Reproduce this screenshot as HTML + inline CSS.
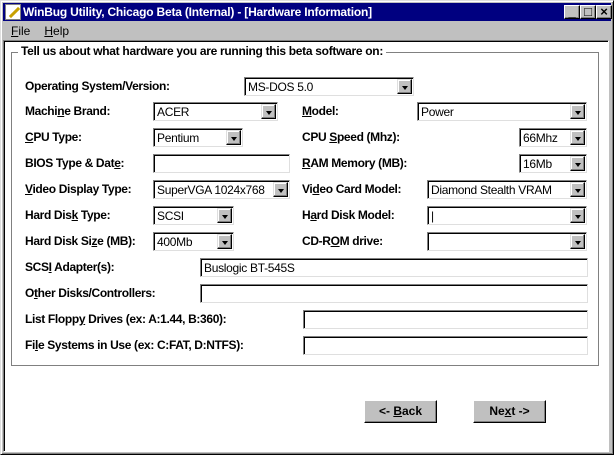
<!DOCTYPE html>
<html><head><meta charset="utf-8"><style>
*{box-sizing:border-box;margin:0;padding:0}
body{width:614px;height:455px;background:#c0c0c0;position:relative;overflow:hidden;font-family:"Liberation Sans",sans-serif;font-size:11px}
.frame{position:absolute;left:0;top:0;width:614px;height:455px;border:1px solid;border-color:#dfdfdf #000 #000 #dfdfdf;box-shadow:inset 1px 1px #fff,inset -1px -1px #808080}
.title{position:absolute;left:3px;top:3px;width:608px;height:18px;background:#000080;color:#fff;font-weight:bold;font-size:12px;line-height:18px;padding-left:20px;letter-spacing:-0.2px}
.ico{position:absolute;left:2px;top:1px;width:16px;height:16px;background:#fff;border:1px solid #808080}
.ico:after{content:"";position:absolute;left:2px;top:6px;width:13px;height:3px;background:#c8a000;transform:rotate(-45deg)}
.tb{position:absolute;top:2px;width:16px;height:14px;background:#c0c0c0;border:1px solid;border-color:#fff #000 #000 #fff;box-shadow:inset -1px -1px #808080;color:#000;font-size:13px;font-weight:bold;line-height:12px;text-align:center}
.menu{position:absolute;left:3px;top:22px;width:608px;height:18px;font-size:12px;line-height:18px}
.menu span{margin-left:8px;margin-right:6px}
.client{position:absolute;left:3px;top:40px;width:606px;height:412px;background:#fff;border:1px solid;border-color:#808080 #fff #fff #808080;box-shadow:inset 1px 1px #000}
.grp{position:absolute;left:11px;top:52px;width:588px;height:314px;border:1px solid #808080;box-shadow:1px 1px #fff,inset 1px 1px #fff}
.grp .lg{position:absolute;left:6px;top:-9px;background:#fff;padding:0 3px;font-weight:bold;font-size:12px;letter-spacing:-0.3px}
.l{position:absolute;font-weight:bold;font-size:12px;letter-spacing:-0.35px;white-space:nowrap}
.in{position:absolute;height:19px;background:#fff;border:1px solid;border-color:#808080 #dfdfdf #dfdfdf #808080;box-shadow:inset 1px 1px #000;font-size:12px;letter-spacing:-0.3px;line-height:17px;padding:1px 0 0 3px;white-space:nowrap;overflow:hidden}
.dd{position:absolute;right:1px;top:1px;width:15px;height:15px;background:#c0c0c0;border:1px solid;border-color:#dfdfdf #000 #000 #dfdfdf;box-shadow:inset -1px -1px #808080,inset 1px 1px #fff}
.dd:after{content:"";position:absolute;left:4px;top:6px;border:3px solid transparent;border-top:4px solid #000;border-bottom:0}
.btn{position:absolute;width:73px;height:23px;background:#c0c0c0;border:1px solid;border-color:#fff #000 #000 #fff;box-shadow:inset -1px -1px #808080;font-weight:bold;font-size:12px;text-align:center;line-height:21px}
u{text-decoration:underline}
</style></head><body>
<div class="frame"></div>
<div class="title"><div class="ico"></div>WinBug Utility, Chicago Beta (Internal) - [Hardware Information]
<div class="tb" style="left:561px">_</div><div class="tb" style="left:577px">□</div><div class="tb" style="left:593px">×</div></div>
<div class="menu"><span><u>F</u>ile</span><span><u>H</u>elp</span></div>
<div class="client"></div>
<div class="grp"><div class="lg">Tell us about what hardware you are running this beta software on:</div></div>

<div class="l" style="left:25px;top:79px">Operatin<u>g</u> System/Version:</div>
<div class="in" style="left:244px;top:77px;width:170px">MS-DOS 5.0<div class="dd"></div></div>

<div class="l" style="left:25px;top:104px">Machi<u>n</u>e Brand:</div>
<div class="in" style="left:153px;top:102px;width:125px">ACER<div class="dd"></div></div>
<div class="l" style="left:302px;top:104px"><u>M</u>odel:</div>
<div class="in" style="left:417px;top:102px;width:170px">Power<div class="dd"></div></div>

<div class="l" style="left:25px;top:130px"><u>C</u>PU Type:</div>
<div class="in" style="left:153px;top:128px;width:90px">Pentium<div class="dd"></div></div>
<div class="l" style="left:302px;top:130px">CPU <u>S</u>peed (Mhz):</div>
<div class="in" style="left:519px;top:128px;width:68px">66Mhz<div class="dd"></div></div>

<div class="l" style="left:25px;top:156px">BIOS Type &amp; Dat<u>e</u>:</div>
<div class="in" style="left:153px;top:154px;width:137px"></div>
<div class="l" style="left:302px;top:156px"><u>R</u>AM Memory (MB):</div>
<div class="in" style="left:519px;top:154px;width:68px">16Mb<div class="dd"></div></div>

<div class="l" style="left:25px;top:182px"><u>V</u>ideo Display Type:</div>
<div class="in" style="left:153px;top:180px;width:137px">SuperVGA 1024x768<div class="dd"></div></div>
<div class="l" style="left:302px;top:182px">Vi<u>d</u>eo Card Model:</div>
<div class="in" style="left:427px;top:180px;width:160px">Diamond Stealth VRAM<div class="dd"></div></div>

<div class="l" style="left:25px;top:208px">Hard Dis<u>k</u> Type:</div>
<div class="in" style="left:153px;top:206px;width:81px">SCSI<div class="dd"></div></div>
<div class="l" style="left:302px;top:208px">H<u>a</u>rd Disk Model:</div>
<div class="in" style="left:427px;top:206px;width:160px">|<div class="dd"></div></div>

<div class="l" style="left:25px;top:234px">Hard Disk Si<u>z</u>e (MB):</div>
<div class="in" style="left:153px;top:232px;width:81px">400Mb<div class="dd"></div></div>
<div class="l" style="left:302px;top:234px">CD-R<u>O</u>M drive:</div>
<div class="in" style="left:427px;top:232px;width:160px"><div class="dd"></div></div>

<div class="l" style="left:25px;top:260px">SCS<u>I</u> Adapter(s):</div>
<div class="in" style="left:200px;top:258px;width:388px">Buslogic BT-545S</div>

<div class="l" style="left:25px;top:286px">O<u>t</u>her Disks/Controllers:</div>
<div class="in" style="left:200px;top:284px;width:388px"></div>

<div class="l" style="left:25px;top:312px">List Flopp<u>y</u> Drives (ex: A:1.44, B:360):</div>
<div class="in" style="left:303px;top:310px;width:285px"></div>

<div class="l" style="left:25px;top:338px">Fi<u>l</u>e Systems in Use (ex: C:FAT, D:NTFS):</div>
<div class="in" style="left:303px;top:336px;width:285px"></div>

<div class="btn" style="left:364px;top:400px">&lt;- <u>B</u>ack</div>
<div class="btn" style="left:473px;top:400px">Ne<u>x</u>t -&gt;</div>
</body></html>
